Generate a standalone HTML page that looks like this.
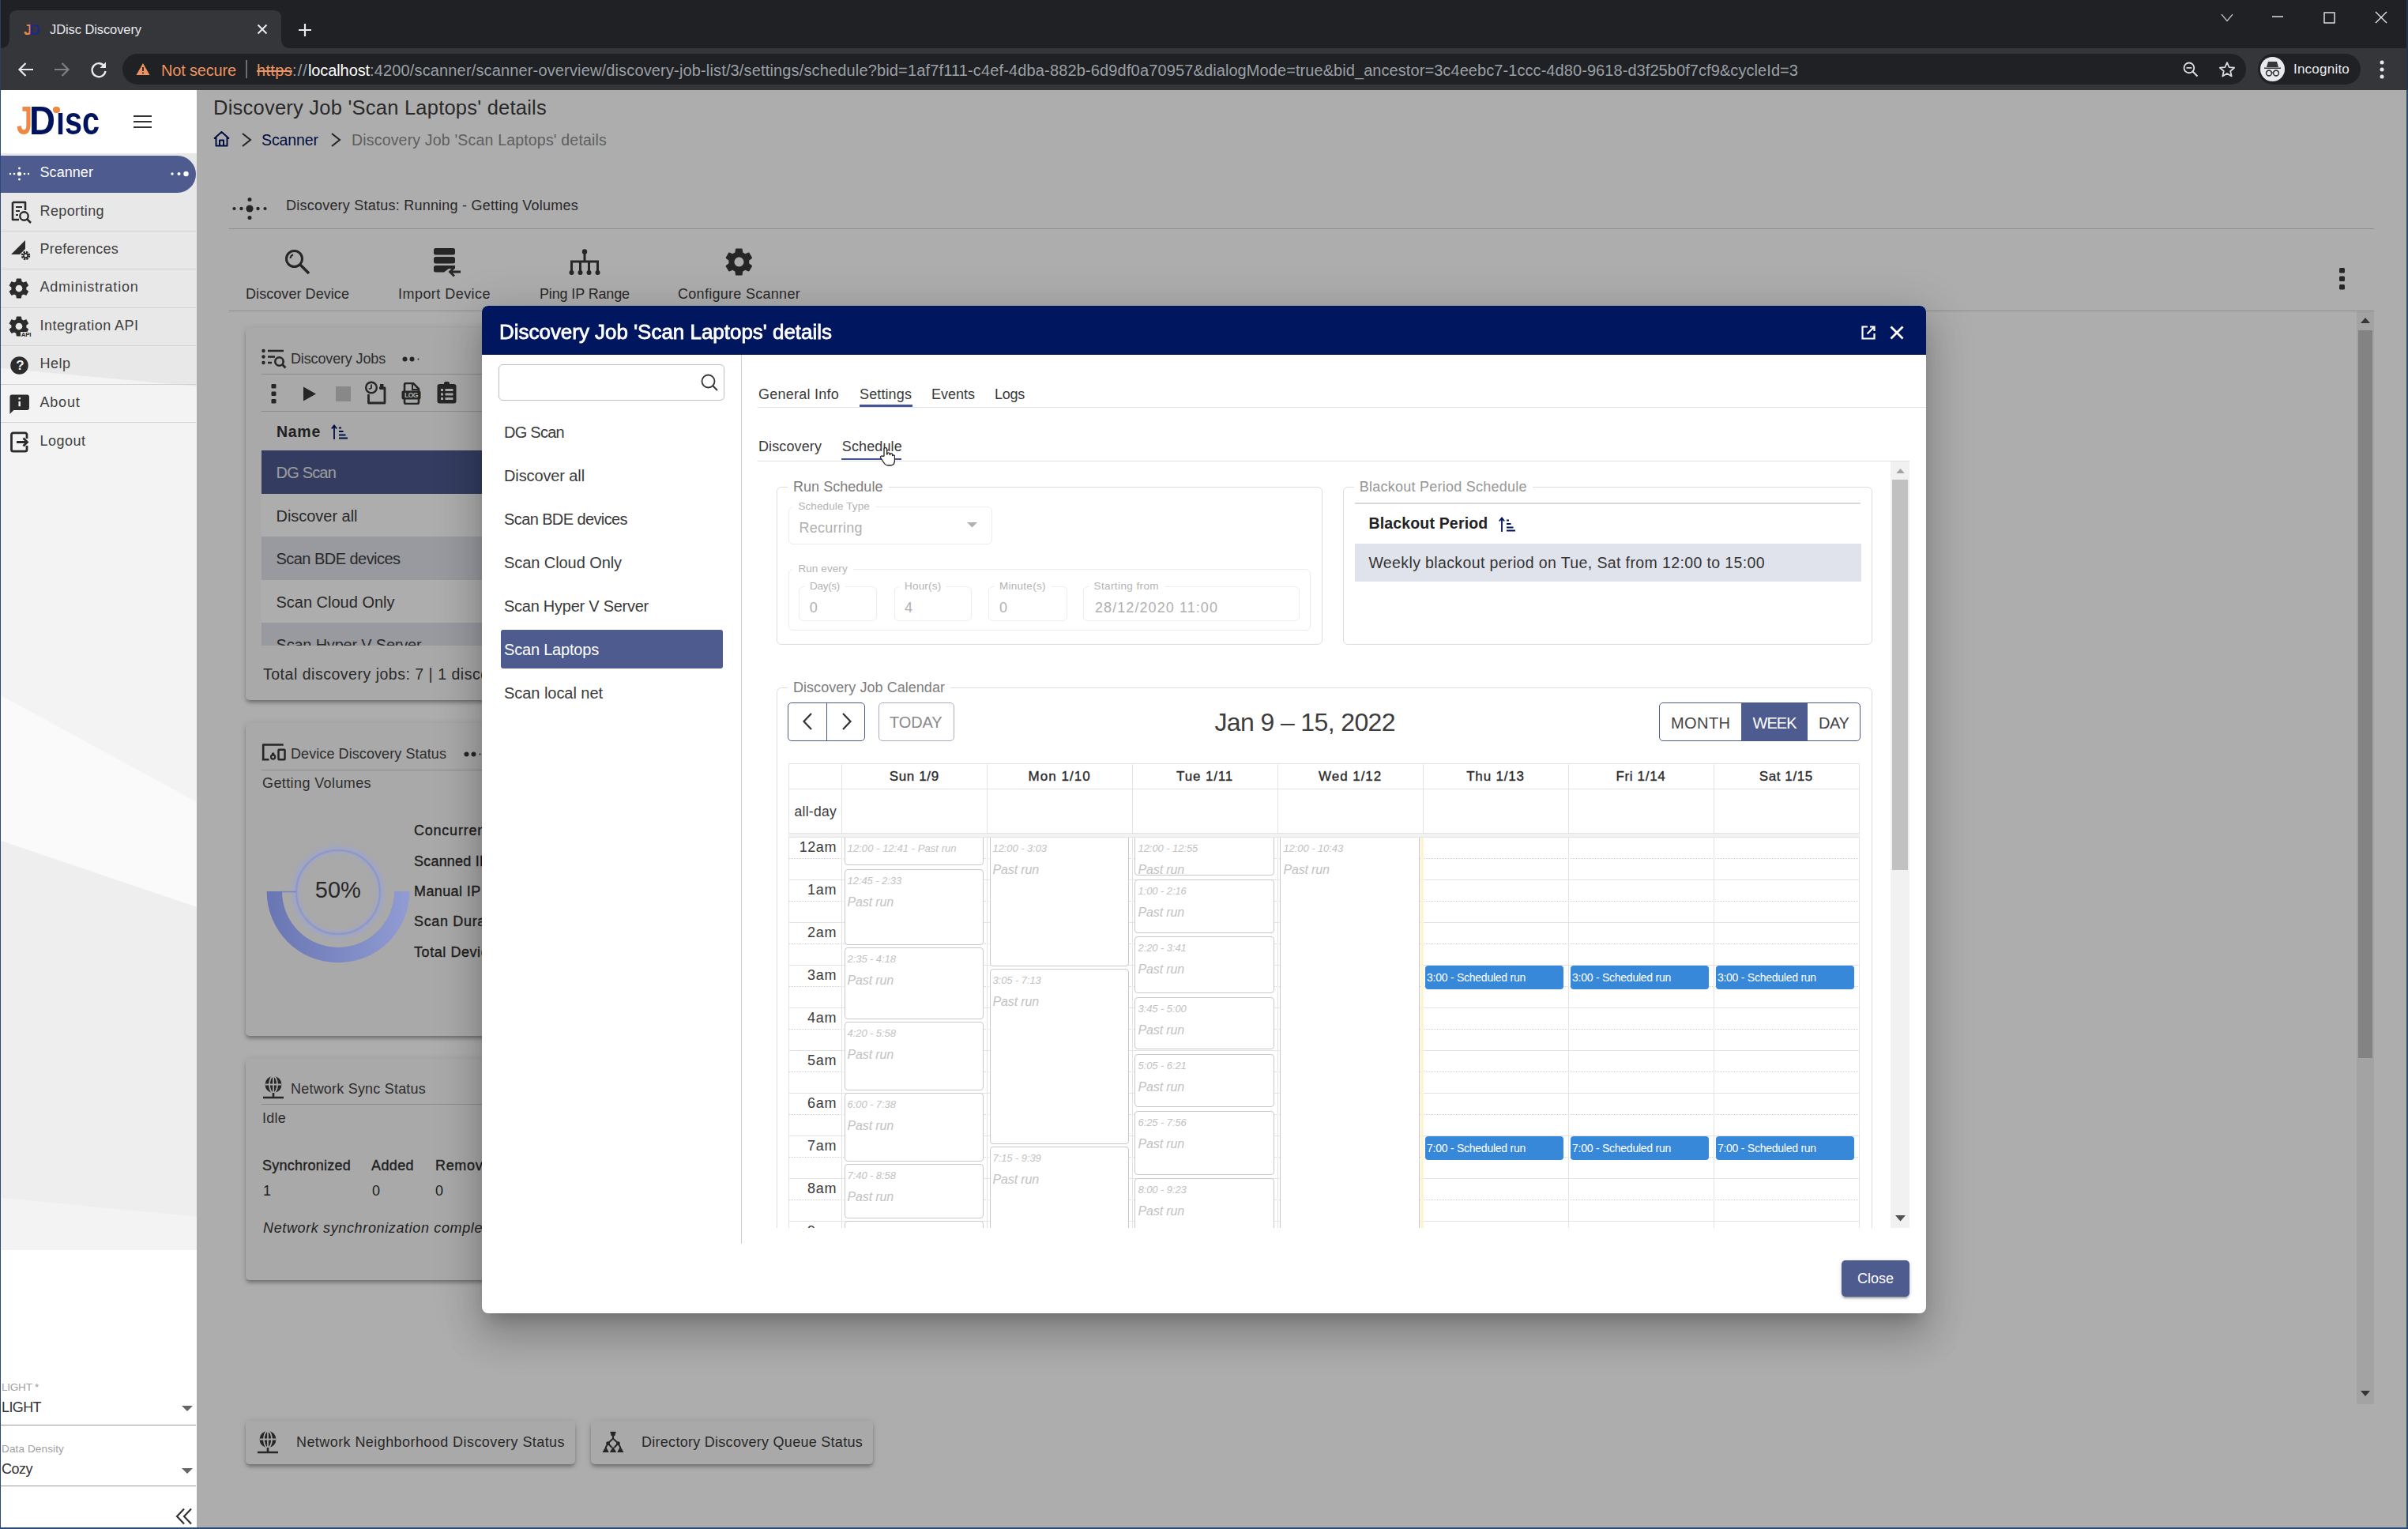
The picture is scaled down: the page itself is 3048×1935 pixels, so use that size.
<!DOCTYPE html>
<html lang="en"><head><meta charset="utf-8"><title>JDisc Discovery</title>
<style>
html,body{margin:0;padding:0;background:#fff;}
body{width:3048px;height:1935px;overflow:hidden;position:relative;font-family:"Liberation Sans",sans-serif;}
#r{position:absolute;left:0;top:0;width:3048px;height:1935px;overflow:hidden;}
#r div,#r svg,#r span.t{position:absolute;}
#r span.t{white-space:nowrap;line-height:1;display:block;}
#r div{box-sizing:content-box;}
</style></head>
<body><div id="r">
<div style="left:0px;top:0px;width:3048px;height:61px;background:#202124;"></div>
<div style="left:0px;top:61px;width:3048px;height:53px;background:#35363a;"></div>
<svg style="left:0px;top:13px;" width="372" height="48" viewBox="0 0 372 48"><path d="M0 48 Q12 48 12 36 L12 10 Q12 0 22 0 L346 0 Q356 0 356 10 L356 36 Q356 48 368 48 Z" fill="#35363a"/></svg>
<span class="t" style="left:30.0px;top:27.9px;font-size:19px;color:#ee8844;letter-spacing:-1.567px;font-weight:700;">J</span>
<span class="t" style="left:37.0px;top:27.9px;font-size:19px;color:#1a2a8a;letter-spacing:0.279px;font-weight:700;">D</span>
<span class="t" style="left:63.0px;top:29.1px;font-size:16.5px;color:#e8eaed;letter-spacing:-0.090px;">JDisc Discovery</span>
<svg style="left:325px;top:30px;" width="14" height="14" viewBox="0 0 14 14"><path d="M1.5 1.5 L12.5 12.5 M12.5 1.5 L1.5 12.5" stroke="#e8eaed" stroke-width="2" fill="none"/></svg>
<svg style="left:377px;top:29px;" width="18" height="18" viewBox="0 0 18 18"><path d="M9 1 V17 M1 9 H17" stroke="#e8eaed" stroke-width="2.2" fill="none"/></svg>
<svg style="left:2810.5px;top:16.5px;" width="16" height="11" viewBox="0 0 16 11"><path d="M1 1.200 L8 9.500 L15 1.200" stroke="#c8c9cb" stroke-width="1.300" fill="none"/></svg>
<svg style="left:2876px;top:20px;" width="14" height="3" viewBox="0 0 14 3"><path d="M0 1 H14" stroke="#e8eaed" stroke-width="1.4"/></svg>
<svg style="left:2941px;top:15px;" width="15" height="15" viewBox="0 0 15 15"><rect x="1" y="1" width="13" height="13" stroke="#e8eaed" stroke-width="1.4" fill="none"/></svg>
<svg style="left:3006px;top:14px;" width="16" height="16" viewBox="0 0 16 16"><path d="M1 1 L15 15 M15 1 L1 15" stroke="#e8eaed" stroke-width="1.4" fill="none"/></svg>
<svg style="left:22px;top:77px;" width="22" height="22" viewBox="0 0 22 22"><path d="M20 11 H3 M10.5 3 L2.5 11 L10.5 19" stroke="#e8eaed" stroke-width="2.2" fill="none"/></svg>
<svg style="left:67px;top:77px;" width="22" height="22" viewBox="0 0 22 22"><path d="M2 11 H19 M11.5 3 L19.5 11 L11.5 19" stroke="#7d8084" stroke-width="2.2" fill="none"/></svg>
<svg style="left:113px;top:76px;" width="24" height="24" viewBox="0 0 24 24"><path d="M19.5 8.5 A8.5 8.5 0 1 0 20.5 14" stroke="#e8eaed" stroke-width="2.3" fill="none"/><path d="M21 2.5 V10 H13.5 Z" fill="#e8eaed"/></svg>
<div style="left:155px;top:68px;width:2688px;height:39px;background:#202124;border-radius:20px;"></div>
<svg style="left:172px;top:79px;" width="18" height="17" viewBox="0 0 18 17"><path d="M9 1 L17.5 16 H0.5 Z" fill="#ee9460"/><path d="M9 6 V11 M9 12.5 V14.3" stroke="#202124" stroke-width="1.8"/></svg>
<span class="t" style="left:204.0px;top:78.5px;font-size:20px;color:#ee9460;letter-spacing:-0.171px;">Not secure</span>
<div style="left:311px;top:76px;width:1.5px;height:23px;background:#6b6e72;"></div>
<span class="t" style="left:325.0px;top:78.5px;font-size:20px;color:#ee9460;letter-spacing:0.328px;text-decoration:line-through;">https</span>
<span class="t" style="left:370.0px;top:78.5px;font-size:20px;color:#9aa0a6;letter-spacing:1.110px;">://</span>
<span class="t" style="left:390.0px;top:78.5px;font-size:20px;color:#ffffff;letter-spacing:-0.104px;">localhost</span>
<span class="t" style="left:468.0px;top:78.5px;font-size:20px;color:#9aa0a6;letter-spacing:0.150px;">:4200/scanner/scanner-overview/discovery-job-list/3/settings/schedule?bid=1af7f111-c4ef-4dba-882b-6d9df0a70957&amp;</span>
<span class="t" style="left:1524.0px;top:78.5px;font-size:20px;color:#9aa0a6;letter-spacing:0.072px;">dialogMode=true&amp;bid_ancestor=3c4eebc7-1ccc-4d80-9618-d3f25b0f7cf9&amp;cycleId=3</span>
<svg style="left:2762px;top:77px;" width="22" height="22" viewBox="0 0 26 26"><circle cx="10.5" cy="10.5" r="7.5" stroke="#dadce0" stroke-width="2.2" fill="none"/><path d="M16 16 L23 23" stroke="#dadce0" stroke-width="2.4"/><path d="M6.5 10.5 H14.5" stroke="#dadce0" stroke-width="2"/></svg>
<svg style="left:2807.5px;top:76.5px;" width="22" height="22" viewBox="0 0 26 26"><path d="M13 2.5 L16.1 9.6 L23.8 10.3 L18 15.4 L19.7 23 L13 19 L6.3 23 L8 15.4 L2.2 10.3 L9.9 9.6 Z" stroke="#dadce0" stroke-width="2.1" fill="none" stroke-linejoin="round"/></svg>
<div style="left:2858px;top:68px;width:130px;height:39px;background:#202124;border-radius:20px;"></div>
<div style="left:2861px;top:72px;width:31px;height:31px;background:#e8eaed;border-radius:50%;"></div>
<svg style="left:2864px;top:76px;" width="25" height="23" viewBox="0 0 25 23"><path d="M7 2 H18 L20 9 H5 Z M2 9.5 H23 V11 H2 Z" fill="#35363a"/><circle cx="8" cy="16.5" r="3.4" stroke="#35363a" stroke-width="1.6" fill="none"/><circle cx="17" cy="16.5" r="3.4" stroke="#35363a" stroke-width="1.6" fill="none"/><path d="M11.4 16 H13.6" stroke="#35363a" stroke-width="1.4"/></svg>
<span class="t" style="left:2903.0px;top:78.9px;font-size:17px;color:#e8eaed;letter-spacing:0.223px;">Incognito</span>
<svg style="left:3011px;top:75px;" width="8" height="26" viewBox="0 0 8 26"><circle cx="4" cy="4" r="2.5" fill="#e8eaed"/><circle cx="4" cy="13" r="2.5" fill="#e8eaed"/><circle cx="4" cy="22" r="2.5" fill="#e8eaed"/></svg>
<div style="left:0px;top:0px;width:1px;height:114px;background:#2a3f63;"></div>
<div style="left:3046px;top:0px;width:2px;height:114px;background:#22344e;"></div>
<div style="left:0px;top:114px;width:249px;height:1821px;background:#ffffff;"></div>
<svg style="left:1px;top:194px;" width="248" height="1388" viewBox="0 0 248 1388"><rect width="248" height="1388" fill="#f3f3f3"/><polygon points="0,0 248,0 248,295 0,272" fill="#e8e8e8"/><polygon points="0,686 248,821 248,954 0,870" fill="#fafafa"/><polygon points="0,870 248,954 248,1346 0,1322" fill="#eeeeee"/><polygon points="0,1322 248,1346 248,1388 0,1388" fill="#f3f3f3"/></svg>
<span class="t" style="left:21.0px;top:128.2px;font-size:50px;color:#ee8844;letter-spacing:0.000px;font-weight:700;transform:scaleX(0.7192);transform-origin:0 50%;">J</span>
<span class="t" style="left:37.0px;top:128.2px;font-size:50px;color:#00145e;letter-spacing:0.000px;font-weight:700;transform:scaleX(0.9139);transform-origin:0 50%;">D</span>
<span class="t" style="left:70.5px;top:128.2px;font-size:50px;color:#00145e;letter-spacing:0.000px;font-weight:700;transform:scaleX(0.7913);transform-origin:0 50%;">ısc</span>
<div style="left:67px;top:134.5px;width:8.5px;height:8.5px;background:#ee8844;border-radius:50%;"></div>
<div style="left:169px;top:146px;width:23px;height:2.2px;background:#333;"></div>
<div style="left:169px;top:153px;width:23px;height:2.2px;background:#333;"></div>
<div style="left:169px;top:160px;width:23px;height:2.2px;background:#333;"></div>
<div style="left:1px;top:196.5px;width:246.5px;height:47px;background:#4d5b8f;border-radius:0 24px 24px 0;"></div>
<svg style="left:10px;top:207px;" width="28" height="26" viewBox="0 0 28 26"><g fill="#fff"><circle cx="14.5" cy="13" r="2.6"/><circle cx="14.5" cy="6" r="1.4"/><circle cx="14.5" cy="20" r="1.4"/><circle cx="8" cy="13" r="1.3"/><circle cx="3" cy="13" r="1.2"/><circle cx="21" cy="13" r="1.3"/><circle cx="26" cy="13" r="1.2"/></g></svg>
<span class="t" style="left:50.5px;top:209.4px;font-size:18px;color:#ffffff;letter-spacing:0.065px;">Scanner</span>
<svg style="left:214px;top:215px;" width="28" height="10" viewBox="0 0 28 10"><g fill="#fff"><circle cx="4" cy="5" r="1.7"/><circle cx="12.5" cy="5" r="2"/><circle cx="21.5" cy="5" r="3.2"/></g></svg>
<span class="t" style="left:50.5px;top:257.6px;font-size:18px;color:#3f3f3f;letter-spacing:0.384px;">Reporting</span>
<div style="left:1px;top:292px;width:247px;height:0px;border-top:1px solid #d3d3d3;"></div>
<span class="t" style="left:50.5px;top:306.0px;font-size:18px;color:#3f3f3f;letter-spacing:0.223px;">Preferences</span>
<div style="left:1px;top:340.4px;width:247px;height:0px;border-top:1px solid #d3d3d3;"></div>
<span class="t" style="left:50.5px;top:354.4px;font-size:18px;color:#3f3f3f;letter-spacing:0.782px;">Administration</span>
<div style="left:1px;top:388.8px;width:247px;height:0px;border-top:1px solid #d3d3d3;"></div>
<span class="t" style="left:50.5px;top:402.8px;font-size:18px;color:#3f3f3f;letter-spacing:0.461px;">Integration API</span>
<div style="left:1px;top:437.2px;width:247px;height:0px;border-top:1px solid #d3d3d3;"></div>
<span class="t" style="left:50.5px;top:451.4px;font-size:18px;color:#3f3f3f;letter-spacing:0.495px;">Help</span>
<div style="left:1px;top:485.8px;width:247px;height:0px;border-top:1px solid #d3d3d3;"></div>
<span class="t" style="left:50.5px;top:500.0px;font-size:18px;color:#3f3f3f;letter-spacing:0.792px;">About</span>
<div style="left:1px;top:534.4px;width:247px;height:0px;border-top:1px solid #d3d3d3;"></div>
<span class="t" style="left:50.5px;top:548.7px;font-size:18px;color:#3f3f3f;letter-spacing:0.491px;">Logout</span>
<svg style="left:13px;top:254px;" width="28" height="30" viewBox="0 0 28 30"><path d="M3 2 H19 V12 M3 2 V24 H11" stroke="#2b2b2b" stroke-width="2.6" fill="none" stroke-linejoin="round"/><path d="M7 8 H15 M7 13 H12 M7 18 H10" stroke="#2b2b2b" stroke-width="2.2"/><circle cx="17.5" cy="19.5" r="5.2" stroke="#2b2b2b" stroke-width="2.4" fill="none"/><path d="M21.5 23.5 L26 28" stroke="#2b2b2b" stroke-width="2.6"/></svg>
<svg style="left:13px;top:303px;" width="28" height="28" viewBox="0 0 28 28"><path d="M1 19 L19 1 V12 L12 19 Z" fill="#2b2b2b"/><circle cx="19.5" cy="20.5" r="4.2" stroke="#2b2b2b" stroke-width="3" fill="none" stroke-dasharray="2.2 1.1"/><circle cx="19.5" cy="20.5" r="2.6" stroke="#2b2b2b" stroke-width="1.6" fill="none"/></svg>
<svg style="left:9.4px;top:350.4px;" width="30" height="30" viewBox="0 0 24 24"><g fill="#2b2b2b"><path d="M19.4 13c0-.3.1-.6.1-1s0-.7-.1-1l2.100-1.700c.2-.2.200-.400.100-.600l-2-3.500c-.100-.200-.400-.300-.600-.200l-2.500 1c-.500-.400-1.100-.700-1.700-1l-.400-2.600c0-.200-.200-.400-.500-.400h-4c-.200 0-.500.200-.500.400l-.400 2.600c-.600.300-1.200.600-1.700 1l-2.500-1c-.200-.100-.500 0-.600.200l-2 3.500c-.100.200-.100.500.100.600l2.100 1.700c0 .3-.1.600-.1 1s0 .7.100 1l-2.100 1.700c-.200.200-.200.400-.100.600l2 3.500c.100.200.400.300.600.200l2.500-1c.5.400 1.100.7 1.700 1l.4 2.600c0 .2.200.4.500.4h4c.2 0 .5-.2.500-.4l.4-2.600c.6-.3 1.200-.6 1.700-1l2.500 1c.2.100.5 0 .6-.2l2-3.500c.1-.2.100-.5-.1-.6l-2.100-1.700zM12 15.500c-1.900 0-3.500-1.600-3.500-3.500s1.600-3.500 3.500-3.500 3.500 1.600 3.500 3.500-1.600 3.500-3.500 3.500z"/></g></svg>
<svg style="left:9.4px;top:398.2px;" width="30" height="30" viewBox="0 0 24 24"><g fill="#2b2b2b"><path d="M19.4 13c0-.3.1-.6.1-1s0-.7-.1-1l2.100-1.700c.2-.2.200-.400.100-.600l-2-3.500c-.100-.200-.400-.300-.600-.200l-2.500 1c-.500-.400-1.100-.700-1.700-1l-.400-2.600c0-.200-.200-.400-.500-.400h-4c-.200 0-.500.200-.500.400l-.400 2.600c-.600.300-1.200.600-1.700 1l-2.500-1c-.200-.100-.500 0-.600.200l-2 3.500c-.100.200-.100.500.100.600l2.100 1.700c0 .3-.1.600-.1 1s0 .7.100 1l-2.100 1.700c-.200.200-.200.400-.100.600l2 3.500c.100.200.400.300.600.200l2.500-1c.5.400 1.100.7 1.700 1l.4 2.600c0 .2.200.4.500.4h4c.2 0 .5-.2.500-.4l.4-2.600c.6-.3 1.200-.6 1.700-1l2.500 1c.2.100.5 0 .6-.2l2-3.500c.1-.2.100-.5-.1-.6l-2.100-1.700zM12 15.500c-1.900 0-3.500-1.600-3.500-3.500s1.600-3.500 3.500-3.500 3.500 1.600 3.500 3.500-1.600 3.500-3.500 3.500z"/></g></svg>
<div style="left:26px;top:419.5px;width:14px;height:8px;background:#e8e8e8;"></div>
<span class="t" style="left:26.7px;top:419.6px;font-size:8px;color:#2b2b2b;letter-spacing:-0.279px;font-weight:700;">API</span>
<svg style="left:11.2px;top:448.5px;" width="27" height="27" viewBox="0 0 24 24"><circle cx="12" cy="12" r="10" fill="#2b2b2b"/></svg>
<span class="t" style="left:20.2px;top:454.2px;font-size:17px;color:#efefef;letter-spacing:-1.384px;font-weight:700;">?</span>
<svg style="left:9.75px;top:497px;" width="29.4" height="29.4" viewBox="0 0 24 24"><path d="M20 2H4c-1.100 0-2 .900-2 2v18l4-4h14c1.100 0 2-.900 2-2V4c0-1.100-.900-2-2-2zm-7 12h-2V9h2v5zm0-7h-2V5h2v2z" fill="#2b2b2b"/></svg>
<svg style="left:13px;top:545.5px;" width="24" height="27" viewBox="0 0 24 27"><path d="M21 9 V4 a2.200 2.200 0 0 0 -2.200 -2.200 H3.700 a2.200 2.200 0 0 0 -2.200 2.200 V23 a2.200 2.200 0 0 0 2.200 2.200 H18.800 a2.200 2.200 0 0 0 2.200 -2.200 V18" stroke="#2b2b2b" stroke-width="2.800" fill="none"/><path d="M8 13.500 H21 M16.500 8.500 L21.500 13.500 L16.500 18.500" stroke="#2b2b2b" stroke-width="2.800" fill="none"/></svg>
<span class="t" style="left:2.0px;top:1748.6px;font-size:13.5px;color:#a0a0a0;letter-spacing:-0.217px;">LIGHT *</span>
<span class="t" style="left:2.0px;top:1772.4px;font-size:18px;color:#333;letter-spacing:-0.601px;">LIGHT</span>
<svg style="left:230px;top:1779px;" width="14" height="8" viewBox="0 0 14 8"><path d="M0 0 H14 L7 7 Z" fill="#666"/></svg>
<div style="left:1px;top:1803px;width:247px;height:1.2px;background:#9a9a9a;"></div>
<span class="t" style="left:2.0px;top:1826.6px;font-size:13.5px;color:#a0a0a0;letter-spacing:0.143px;">Data Density</span>
<span class="t" style="left:2.0px;top:1850.4px;font-size:18px;color:#333;letter-spacing:-0.502px;">Cozy</span>
<svg style="left:230px;top:1858px;" width="14" height="8" viewBox="0 0 14 8"><path d="M0 0 H14 L7 7 Z" fill="#666"/></svg>
<div style="left:1px;top:1880.3px;width:247px;height:1.2px;background:#9a9a9a;"></div>
<svg style="left:221.5px;top:1908px;" width="22" height="22" viewBox="0 0 22 22"><path d="M11 1.500 L2 11 L11 20.500 M20 1.500 L11 11 L20 20.500" stroke="#333" stroke-width="2.200" fill="none"/></svg>
<div style="left:249px;top:114px;width:2797px;height:1819px;background:#ffffff;"></div>
<span class="t" style="left:270.0px;top:123.8px;font-size:25.5px;color:#3d3d3d;letter-spacing:0.230px;">Discovery Job 'Scan Laptops' details</span>
<svg style="left:269px;top:165px;" width="23" height="21" viewBox="0 0 23 21"><path d="M2 10.500 L11.500 2 L21 10.500 M4.500 9 V19.500 H18.500 V9 M9 19.500 V12.500 H14 V19.500" stroke="#00145e" stroke-width="2" fill="none" stroke-linejoin="round"/></svg>
<svg style="left:305px;top:167px;" width="14" height="20" viewBox="0 0 14 20"><path d="M2 2 L12 10 L2 18" stroke="#333" stroke-width="2" fill="none"/></svg>
<span class="t" style="left:331.0px;top:167.7px;font-size:19.5px;color:#00145e;letter-spacing:-0.090px;">Scanner</span>
<svg style="left:418px;top:167px;" width="14" height="20" viewBox="0 0 14 20"><path d="M2 2 L12 10 L2 18" stroke="#333" stroke-width="2" fill="none"/></svg>
<span class="t" style="left:445.0px;top:167.7px;font-size:19.5px;color:#8c8c8c;letter-spacing:0.184px;">Discovery Job 'Scan Laptops' details</span>
<svg style="left:292px;top:247.5px;" width="48" height="34" viewBox="0 0 48 34"><g fill="#383838"><circle cx="24" cy="16" r="4.600"/><circle cx="24" cy="4.500" r="2.500"/><circle cx="24" cy="27.500" r="2.500"/><circle cx="13.500" cy="16" r="2.200"/><circle cx="4.500" cy="16" r="2.100"/><circle cx="34.500" cy="16" r="2.200"/><circle cx="43.500" cy="16" r="2.100"/></g></svg>
<span class="t" style="left:362.0px;top:251.4px;font-size:18px;color:#3d3d3d;letter-spacing:0.229px;">Discovery Status: Running - Getting Volumes</span>
<div style="left:290px;top:288.5px;width:2715px;height:1.2px;background:#d0d0d0;"></div>
<svg style="left:359px;top:314px;" width="34" height="34" viewBox="0 0 34 34"><circle cx="13.500" cy="13.500" r="10" stroke="#383838" stroke-width="3" fill="none"/><path d="M21 21 L32 32" stroke="#383838" stroke-width="3.600"/><path d="M8.500 13 A5.500 5.500 0 0 1 12 8.200" stroke="#383838" stroke-width="2" fill="none"/></svg>
<span class="t" style="left:311.0px;top:363.4px;font-size:18px;color:#3d3d3d;letter-spacing:0.064px;">Discover Device</span>
<svg style="left:548px;top:313px;" width="36" height="38" viewBox="0 0 36 38"><g fill="#383838"><rect x="1" y="1" width="27" height="8.500" rx="2.500"/><rect x="1" y="12" width="27" height="8.500" rx="2.500"/><path d="M1 25.500 a2.500 2.500 0 0 1 2.500 -2.500 H28 V27 H20 L14 31.500 H3.500 a2.500 2.500 0 0 1 -2.500 -2.500 Z"/></g><path d="M35 31 H22 M27 25.500 L21.500 31 L27 36.500" stroke="#383838" stroke-width="2.800" fill="none"/></svg>
<span class="t" style="left:504.0px;top:363.4px;font-size:18px;color:#3d3d3d;letter-spacing:0.459px;">Import Device</span>
<svg style="left:720px;top:314px;" width="40" height="36" viewBox="0 0 40 36"><circle cx="20" cy="4.500" r="3.200" fill="#383838"/><path d="M20 6 V17 M3.500 31 V17 H36.500 V31 M14.500 17 V31 M25.500 17 V31" stroke="#383838" stroke-width="3" fill="none"/><g fill="#383838"><circle cx="3.500" cy="31" r="3"/><circle cx="14.500" cy="31" r="3"/><circle cx="25.500" cy="31" r="3"/><circle cx="36.500" cy="31" r="3"/></g></svg>
<span class="t" style="left:683.0px;top:363.4px;font-size:18px;color:#3d3d3d;letter-spacing:-0.135px;">Ping IP Range</span>
<svg style="left:915px;top:311px;" width="41" height="41" viewBox="0 0 24 24"><g fill="#383838"><path d="M19.4 13c0-.3.1-.6.1-1s0-.7-.1-1l2.100-1.700c.2-.2.200-.400.100-.600l-2-3.500c-.100-.200-.400-.300-.600-.200l-2.500 1c-.500-.400-1.100-.700-1.700-1l-.400-2.600c0-.200-.200-.400-.500-.400h-4c-.200 0-.500.200-.500.400l-.400 2.600c-.600.300-1.200.600-1.700 1l-2.500-1c-.200-.100-.500 0-.600.200l-2 3.500c-.100.200-.100.500.100.600l2.100 1.700c0 .3-.1.600-.1 1s0 .7.100 1l-2.100 1.700c-.200.200-.200.400-.100.600l2 3.500c.100.200.400.300.600.200l2.500-1c.5.400 1.100.7 1.700 1l.4 2.600c0 .2.200.4.500.4h4c.2 0 .5-.2.500-.4l.4-2.600c.6-.3 1.200-.6 1.700-1l2.500 1c.2.100.5 0 .6-.2l2-3.500c.1-.2.100-.5-.1-.6l-2.100-1.700zM12 15.500c-1.900 0-3.500-1.600-3.500-3.500s1.600-3.500 3.500-3.500 3.500 1.600 3.500 3.500-1.600 3.500-3.500 3.500z"/></g></svg>
<span class="t" style="left:858.0px;top:363.4px;font-size:18px;color:#3d3d3d;letter-spacing:0.289px;">Configure Scanner</span>
<div style="left:290px;top:392.5px;width:2715px;height:1.2px;background:#d0d0d0;"></div>
<svg style="left:2960px;top:339px;" width="9" height="28" viewBox="0 0 9 28"><rect x="1" y="0" width="7" height="6.500" rx="1.500" fill="#383838"/><rect x="1" y="10.500" width="7" height="6.500" rx="1.500" fill="#383838"/><rect x="1" y="21" width="7" height="6.500" rx="1.500" fill="#383838"/></svg>
<div style="left:2983px;top:394px;width:22px;height:1383px;background:#f1f1f1;"></div>
<div style="left:2985px;top:418px;width:18px;height:921px;background:#c1c1c1;"></div>
<svg style="left:2988px;top:402px;" width="12" height="8" viewBox="0 0 12 8"><path d="M0 7 L6 0 L12 7 Z" fill="#505050"/></svg>
<svg style="left:2988px;top:1760px;" width="12" height="8" viewBox="0 0 12 8"><path d="M0 0 L6 7 L12 0 Z" fill="#505050"/></svg>
<div style="left:311px;top:415px;width:1300px;height:471px;background:#f9f9f9;border-radius:5px;box-shadow:0 4px 4px -2px rgba(0,0,0,.2),0 4px 5px 0 rgba(0,0,0,.14),0 1px 10px 0 rgba(0,0,0,.12);"></div>
<svg style="left:331px;top:441px;" width="32" height="26" viewBox="0 0 32 26"><g fill="#383838"><circle cx="2.500" cy="3" r="2.200"/><circle cx="2.500" cy="10.500" r="2.200"/><circle cx="2.500" cy="18" r="2.200"/></g><path d="M8 3 H28 M8 10.500 H17 M8 18 H13" stroke="#383838" stroke-width="2.400"/><circle cx="22.500" cy="16.500" r="5.200" stroke="#383838" stroke-width="2.600" fill="none"/><path d="M26.500 20.500 L30.500 24.500" stroke="#383838" stroke-width="2.800"/></svg>
<span class="t" style="left:368.0px;top:445.4px;font-size:18px;color:#444;letter-spacing:-0.145px;">Discovery Jobs</span>
<svg style="left:509px;top:450px;" width="24" height="9" viewBox="0 0 24 9"><circle cx="3.500" cy="4.500" r="3" fill="#383838"/><circle cx="12.500" cy="4.500" r="3" fill="#383838"/><circle cx="20.500" cy="4.500" r="1" fill="#383838"/></svg>
<div style="left:331px;top:472.5px;width:1260px;height:1.2px;background:#cfcfcf;"></div>
<svg style="left:343px;top:486px;" width="8" height="25" viewBox="0 0 8 25"><rect x="0.500" y="0" width="6" height="5.500" rx="1.200" fill="#383838"/><rect x="0.500" y="9.500" width="6" height="5.500" rx="1.200" fill="#383838"/><rect x="0.500" y="19" width="6" height="5.500" rx="1.200" fill="#383838"/></svg>
<svg style="left:383px;top:489px;" width="18" height="19" viewBox="0 0 18 19"><path d="M1 0.500 L17 9.500 L1 18.500 Z" fill="#383838"/></svg>
<div style="left:425px;top:489px;width:18.5px;height:18.5px;background:#c9c9c9;"></div>
<svg style="left:461px;top:482px;" width="30" height="30" viewBox="0 0 30 30"><circle cx="9" cy="8.500" r="6.800" stroke="#383838" stroke-width="2.400" fill="none"/><path d="M9 4.500 V9 L6 10.500" stroke="#383838" stroke-width="1.800" fill="none"/><path d="M5.500 17 V28 H26 V9 H19" stroke="#383838" stroke-width="2.800" fill="none" stroke-linejoin="round"/><rect x="20" y="4" width="4.500" height="7" fill="#383838"/></svg>
<svg style="left:508px;top:484px;" width="25" height="28" viewBox="0 0 25 28"><path d="M4 12 V3 a2 2 0 0 1 2 -2 H15 L22 8 V12" stroke="#383838" stroke-width="2.600" fill="none"/><path d="M14 2 V9 H21" stroke="#383838" stroke-width="2" fill="none"/><rect x="0.500" y="10.500" width="24" height="11" rx="2" fill="#383838"/><path d="M4 21 V25 a2 2 0 0 0 2 2 H20 a2 2 0 0 0 2 -2 V21" stroke="#383838" stroke-width="2.600" fill="none"/></svg>
<span class="t" style="left:512.0px;top:495.9px;font-size:8.5px;color:#fff;letter-spacing:-0.472px;font-weight:700;">LOG</span>
<svg style="left:553px;top:483px;" width="25" height="28" viewBox="0 0 25 28"><rect x="0.500" y="3" width="24" height="24.500" rx="3" fill="#383838"/><rect x="9" y="0" width="7" height="6" rx="2" fill="#383838"/><g fill="#f9f9f9"><rect x="5" y="9" width="3" height="3"/><rect x="10.500" y="9" width="10" height="3"/><rect x="5" y="14.500" width="3" height="3"/><rect x="10.500" y="14.500" width="10" height="3"/><rect x="5" y="20" width="3" height="3"/><rect x="10.500" y="20" width="10" height="3"/></g></svg>
<div style="left:331px;top:519.5px;width:1260px;height:1.2px;background:#cfcfcf;"></div>
<span class="t" style="left:350.0px;top:536.7px;font-size:19.5px;color:#303030;letter-spacing:0.722px;font-weight:700;">Name</span>
<svg style="left:419px;top:536px;" width="22" height="22" viewBox="0 0 22 22"><path d="M4 20 V3 M0.800 6.500 L4 2.500 L7.200 6.500" stroke="#00145e" stroke-width="1.800" fill="none"/><path d="M10 5.500 H13 M10 10 H15.500 M10 14.500 H18.500 M10 18.500 H21" stroke="#00145e" stroke-width="1.800"/></svg>
<div style="left:331px;top:570px;width:1260px;height:247px;overflow:hidden;"><div style="left:0px;top:0px;width:1260px;height:54.5px;background:#4d5b8f;"></div>
<span class="t" style="left:18.5px;top:18.2px;font-size:20px;color:#e6e6e6;letter-spacing:-0.806px;">DG Scan</span>
<div style="left:0px;top:54.5px;width:1260px;height:54.5px;background:#ffffff;"></div>
<span class="t" style="left:18.5px;top:72.7px;font-size:20px;color:#3d3d3d;letter-spacing:-0.030px;">Discover all</span>
<div style="left:0px;top:109px;width:1260px;height:54.5px;background:#e0e3ec;"></div>
<span class="t" style="left:18.5px;top:127.2px;font-size:20px;color:#3d3d3d;letter-spacing:-0.540px;">Scan BDE devices</span>
<div style="left:0px;top:163.5px;width:1260px;height:54.5px;background:#ffffff;"></div>
<span class="t" style="left:18.5px;top:181.7px;font-size:20px;color:#3d3d3d;letter-spacing:-0.005px;">Scan Cloud Only</span>
<div style="left:0px;top:218px;width:1260px;height:54.5px;background:#e0e3ec;"></div>
<span class="t" style="left:18.5px;top:236.2px;font-size:20px;color:#3d3d3d;letter-spacing:-0.203px;">Scan Hyper V Server</span></div>
<span class="t" style="left:333.0px;top:843.7px;font-size:19.5px;color:#3d3d3d;letter-spacing:0.515px;">Total discovery jobs: 7 | 1 discovery job running</span>
<div style="left:311px;top:915px;width:1300px;height:396px;background:#f9f9f9;border-radius:5px;box-shadow:0 4px 4px -2px rgba(0,0,0,.2),0 4px 5px 0 rgba(0,0,0,.14),0 1px 10px 0 rgba(0,0,0,.12);"></div>
<svg style="left:331px;top:940px;" width="32" height="26" viewBox="0 0 32 26"><path d="M27.700 2.500 H2.200 V21.200 M0.800 21.200 H9.500" stroke="#383838" stroke-width="2.600" fill="none" stroke-linejoin="round"/><rect x="21.500" y="8.700" width="8" height="12.500" rx="0.800" stroke="#383838" stroke-width="2.500" fill="none"/><circle cx="14.600" cy="18" r="2.600" stroke="#383838" stroke-width="2.200" fill="none"/><rect x="13" y="12.600" width="3.200" height="3" fill="#383838"/></svg>
<span class="t" style="left:368.0px;top:945.4px;font-size:18px;color:#444;letter-spacing:0.084px;">Device Discovery Status</span>
<svg style="left:587px;top:950px;" width="24" height="9" viewBox="0 0 24 9"><circle cx="3.500" cy="4.500" r="3" fill="#383838"/><circle cx="12.500" cy="4.500" r="3" fill="#383838"/><circle cx="20.500" cy="4.500" r="1" fill="#383838"/></svg>
<div style="left:331px;top:973.5px;width:1260px;height:1.2px;background:#cfcfcf;"></div>
<span class="t" style="left:332.0px;top:982.4px;font-size:18px;color:#444;letter-spacing:0.395px;">Getting Volumes</span>
<span class="t" style="left:398.8px;top:1112.0px;font-size:29px;color:#3d3d3d;letter-spacing:-0.014px;">50%</span>
<span class="t" style="left:524.0px;top:1042.4px;font-size:18px;color:#303030;letter-spacing:0.776px;-webkit-text-stroke:0.35px currentColor;">Concurrent Threads</span>
<span class="t" style="left:524.0px;top:1080.7px;font-size:18px;color:#303030;letter-spacing:0.206px;-webkit-text-stroke:0.35px currentColor;">Scanned IPs</span>
<span class="t" style="left:524.0px;top:1119.0px;font-size:18px;color:#303030;letter-spacing:0.394px;-webkit-text-stroke:0.35px currentColor;">Manual IP Ranges</span>
<span class="t" style="left:524.0px;top:1157.3px;font-size:18px;color:#303030;letter-spacing:0.663px;-webkit-text-stroke:0.35px currentColor;">Scan Duration</span>
<span class="t" style="left:524.0px;top:1195.6px;font-size:18px;color:#303030;letter-spacing:0.561px;-webkit-text-stroke:0.35px currentColor;">Total Devices</span>
<div style="left:311px;top:1340px;width:1300px;height:279.5px;background:#f9f9f9;border-radius:5px;box-shadow:0 4px 4px -2px rgba(0,0,0,.2),0 4px 5px 0 rgba(0,0,0,.14),0 1px 10px 0 rgba(0,0,0,.12);"></div>
<svg style="left:332px;top:1361px;" width="28" height="30" viewBox="0 0 28 30"><circle cx="14" cy="11.500" r="10.500" fill="#383838"/><path d="M14 1 V22 M3.500 11.500 H24.500" stroke="#f9f9f9" stroke-width="1.800"/><ellipse cx="14" cy="11.500" rx="5" ry="10.500" stroke="#f9f9f9" stroke-width="1.800" fill="none"/><path d="M14 22 V27 M1 28 H27" stroke="#383838" stroke-width="2.600"/></svg>
<span class="t" style="left:368.0px;top:1369.4px;font-size:18px;color:#444;letter-spacing:0.207px;">Network Sync Status</span>
<div style="left:331px;top:1397px;width:1260px;height:1.2px;background:#cfcfcf;"></div>
<span class="t" style="left:332.0px;top:1406.4px;font-size:18px;color:#444;letter-spacing:0.245px;">Idle</span>
<span class="t" style="left:332.0px;top:1466.4px;font-size:18px;color:#303030;letter-spacing:0.245px;-webkit-text-stroke:0.35px currentColor;">Synchronized</span>
<span class="t" style="left:470.0px;top:1466.4px;font-size:18px;color:#303030;letter-spacing:0.390px;-webkit-text-stroke:0.35px currentColor;">Added</span>
<span class="t" style="left:551.0px;top:1466.4px;font-size:18px;color:#303030;letter-spacing:0.674px;-webkit-text-stroke:0.35px currentColor;">Removed</span>
<span class="t" style="left:333.0px;top:1498.4px;font-size:18px;color:#303030;letter-spacing:0.281px;">1</span>
<span class="t" style="left:471.0px;top:1498.4px;font-size:18px;color:#303030;letter-spacing:0.281px;">0</span>
<span class="t" style="left:551.0px;top:1498.4px;font-size:18px;color:#303030;letter-spacing:0.281px;">0</span>
<span class="t" style="left:333.0px;top:1544.9px;font-size:18px;color:#333;letter-spacing:0.632px;font-style:italic;">Network synchronization completed</span>
<div style="left:311px;top:1797.5px;width:417px;height:55px;background:#f9f9f9;border-radius:5px;box-shadow:0 4px 4px -2px rgba(0,0,0,.2),0 4px 5px 0 rgba(0,0,0,.14),0 1px 10px 0 rgba(0,0,0,.12);"></div>
<svg style="left:325px;top:1810px;" width="28" height="30" viewBox="0 0 28 30"><circle cx="14" cy="11.500" r="10.500" fill="#383838"/><path d="M14 1 V22 M3.500 11.500 H24.500" stroke="#f9f9f9" stroke-width="1.800"/><ellipse cx="14" cy="11.500" rx="5" ry="10.500" stroke="#f9f9f9" stroke-width="1.800" fill="none"/><path d="M14 22 V27 M1 28 H27" stroke="#383838" stroke-width="2.600"/></svg>
<span class="t" style="left:375.0px;top:1816.4px;font-size:18px;color:#3d3d3d;letter-spacing:0.428px;">Network Neighborhood Discovery Status</span>
<div style="left:748px;top:1797.5px;width:357px;height:55px;background:#f9f9f9;border-radius:5px;box-shadow:0 4px 4px -2px rgba(0,0,0,.2),0 4px 5px 0 rgba(0,0,0,.14),0 1px 10px 0 rgba(0,0,0,.12);"></div>
<svg style="left:762px;top:1811px;" width="28" height="28" viewBox="0 0 28 28"><g fill="#383838"><circle cx="14" cy="4" r="2.800"/><rect x="10.500" y="0.800" width="7" height="2.200"/><circle cx="7.500" cy="15.500" r="2.300"/><circle cx="20.500" cy="15.500" r="2.300"/><path d="M0.500 27 L4.700 19.500 L8.900 27 Z"/><path d="M9.800 27 L14 19.500 L18.200 27 Z"/><path d="M19.100 27 L23.300 19.500 L27.500 27 Z"/></g><path d="M14 6 V9.500 M14 9.500 L7.500 15.500 L4.700 21 M14 9.500 L20.500 15.500 L23.300 21 M7.500 15.500 L12.500 21 M20.500 15.500 L15.500 21" stroke="#383838" stroke-width="2" fill="none"/></svg>
<span class="t" style="left:812.0px;top:1816.4px;font-size:18px;color:#3d3d3d;letter-spacing:0.278px;">Directory Discovery Queue Status</span>
<div style="left:249px;top:114px;width:2797px;height:1819px;background:rgba(0,0,0,0.32);"></div>
<svg style="left:327.5px;top:1028.2px;" width="200" height="200" viewBox="0 0 200 200"><defs><filter id="gl" x="-30%" y="-30%" width="160%" height="160%"><feGaussianBlur stdDeviation="2.500"/></filter><linearGradient id="ag" x1="0" y1="0" x2="1" y2="0"><stop offset="0" stop-color="#6976b3"/><stop offset="0.5" stop-color="#7c88c2"/><stop offset="1" stop-color="#909cd2"/></linearGradient></defs><circle cx="100" cy="101" r="54" stroke="#98a3de" stroke-width="9" fill="none" filter="url(#gl)" opacity="0.5"/><circle cx="100" cy="101" r="53" stroke="#8f99c9" stroke-width="2.600" fill="none"/><path d="M9.600 100 A90.400 90.400 0 0 0 190.400 100 L171 100 A71 71 0 0 1 29 100 Z" fill="url(#ag)"/><path d="M29 100.600 H47" stroke="#7784c0" stroke-width="1.500"/></svg>
<div style="left:0px;top:114px;width:1px;height:1821px;background:#2b4a77;"></div>
<div style="left:3046px;top:114px;width:2px;height:1821px;background:#2b4a77;"></div>
<div style="left:0px;top:1933px;width:3048px;height:2px;background:#2b4a77;"></div>
<div style="left:610px;top:387px;width:1828px;height:1274.5px;background:#ffffff;border-radius:8px;box-shadow:0 14px 19px -9px rgba(0,0,0,.2),0 30px 48px 4px rgba(0,0,0,.14),0 11px 58px 10px rgba(0,0,0,.12);"></div>
<div style="left:610px;top:387px;width:1828px;height:62px;background:#00165e;border-radius:8px 8px 0 0;"></div>
<span class="t" style="left:632.0px;top:406.6px;font-size:26.5px;color:#ffffff;letter-spacing:0.000px;-webkit-text-stroke:0.8px currentColor;transform:scaleX(0.9792);transform-origin:0 50%;">Discovery Job 'Scan Laptops' details</span>
<svg style="left:2355px;top:411px;" width="20" height="20" viewBox="0 0 20 20"><path d="M9 2.500 H2.500 V17.500 H17.500 V11" stroke="#fff" stroke-width="2.200" fill="none"/><path d="M12 2.500 H17.500 V8 M17.500 2.500 L8.500 11.500" stroke="#fff" stroke-width="2.200" fill="none"/></svg>
<svg style="left:2391px;top:411px;" width="20" height="20" viewBox="0 0 20 20"><path d="M2.500 2.500 L17.500 17.500 M17.500 2.500 L2.500 17.500" stroke="#fff" stroke-width="2.800" fill="none"/></svg>
<div style="left:631px;top:461px;width:285.5px;height:46px;background:#fff;border:1.500px solid #bdbdbd;border-radius:5px;box-sizing:border-box;"></div>
<svg style="left:886px;top:472px;" width="24" height="24" viewBox="0 0 24 24"><circle cx="10.500" cy="10.500" r="8" stroke="#333" stroke-width="1.800" fill="none"/><path d="M16.500 16.500 L22 22" stroke="#333" stroke-width="2"/></svg>
<span class="t" style="left:638.0px;top:536.5px;font-size:20px;color:#3a3a3a;letter-spacing:-0.735px;">DG Scan</span>
<span class="t" style="left:638.0px;top:591.5px;font-size:20px;color:#3a3a3a;letter-spacing:-0.113px;">Discover all</span>
<span class="t" style="left:638.0px;top:646.5px;font-size:20px;color:#3a3a3a;letter-spacing:-0.602px;">Scan BDE devices</span>
<span class="t" style="left:638.0px;top:701.5px;font-size:20px;color:#3a3a3a;letter-spacing:-0.072px;">Scan Cloud Only</span>
<span class="t" style="left:638.0px;top:756.5px;font-size:20px;color:#3a3a3a;letter-spacing:-0.255px;">Scan Hyper V Server</span>
<div style="left:634px;top:796.5px;width:280.5px;height:49.5px;background:#4d5b8f;border-radius:3px;"></div>
<span class="t" style="left:638.0px;top:811.5px;font-size:20px;color:#ffffff;letter-spacing:-0.193px;">Scan Laptops</span>
<span class="t" style="left:638.0px;top:866.5px;font-size:20px;color:#3a3a3a;letter-spacing:-0.045px;">Scan local net</span>
<div style="left:938px;top:449px;width:1.2px;height:1124.5px;background:#cfcfcf;"></div>
<span class="t" style="left:960.0px;top:489.6px;font-size:18px;color:#3a3a3a;letter-spacing:0.245px;">General Info</span>
<span class="t" style="left:1088.0px;top:489.6px;font-size:18px;color:#3a3a3a;letter-spacing:0.120px;">Settings</span>
<span class="t" style="left:1179.0px;top:489.6px;font-size:18px;color:#3a3a3a;letter-spacing:-0.005px;">Events</span>
<span class="t" style="left:1259.0px;top:489.6px;font-size:18px;color:#3a3a3a;letter-spacing:-0.258px;">Logs</span>
<div style="left:1087.8px;top:512px;width:67.2px;height:3px;background:#45559b;"></div>
<div style="left:959px;top:515.2px;width:1479px;height:1.2px;background:#e0e0e0;"></div>
<span class="t" style="left:960.0px;top:555.8px;font-size:18px;color:#3a3a3a;letter-spacing:0.110px;">Discovery</span>
<span class="t" style="left:1065.8px;top:555.8px;font-size:18px;color:#3a3a3a;letter-spacing:0.118px;">Schedule</span>
<div style="left:1065px;top:579.6px;width:76px;height:2.2px;background:#45559b;"></div>
<div style="left:959px;top:582.5px;width:1458px;height:1.2px;background:#e0e0e0;"></div>
<div style="left:2393.3px;top:583.7px;width:23.5px;height:970.3px;background:#f1f1f1;"></div>
<div style="left:2395.1px;top:607px;width:20px;height:494px;background:#c1c1c1;"></div>
<svg style="left:2399.5px;top:592.8px;" width="11" height="6.5" viewBox="0 0 11 6.5"><path d="M0 6.300 L5.500 0 L11 6.300 Z" fill="#a3a3a3"/></svg>
<svg style="left:2399px;top:1537.5px;" width="13" height="8" viewBox="0 0 13 8"><path d="M0 0 L6.500 7.500 L13 0 Z" fill="#505050"/></svg>
<div style="left:983px;top:616px;width:690.5px;height:199.5px;border:1.2px solid #dddddd;border-radius:6px;box-sizing:border-box;"></div>
<div style="left:997px;top:614px;width:127.5px;height:5px;background:#fff;"></div>
<span class="t" style="left:1004.0px;top:606.9px;font-size:18px;color:#7d7d7d;letter-spacing:0.035px;">Run Schedule</span>
<div style="left:997.5px;top:641.3px;width:258px;height:47.7px;border:1.2px solid #ededed;border-radius:6px;box-sizing:border-box;"></div>
<div style="left:1003.4px;top:639.3px;width:104.5px;height:5px;background:#fff;"></div>
<span class="t" style="left:1010.4px;top:634.4px;font-size:13.5px;color:#b3b3b3;letter-spacing:0.110px;">Schedule Type</span>
<span class="t" style="left:1011.4px;top:658.9px;font-size:18px;color:#b0b0b0;letter-spacing:0.274px;">Recurring</span>
<svg style="left:1224px;top:660.5px;" width="13" height="7" viewBox="0 0 13 7"><path d="M0 0 H13 L6.500 6.500 Z" fill="#b0b0b0"/></svg>
<div style="left:997.5px;top:720px;width:661.7px;height:78px;border:1.2px solid #ececec;border-radius:6px;box-sizing:border-box;"></div>
<div style="left:1003.4px;top:718px;width:76.4px;height:5px;background:#fff;"></div>
<span class="t" style="left:1010.4px;top:713.1px;font-size:13.5px;color:#b3b3b3;letter-spacing:0.097px;">Run every</span>
<div style="left:1011.4px;top:741.7px;width:98.6px;height:44.5px;border:1.2px solid #ededed;border-radius:6px;box-sizing:border-box;"></div>
<div style="left:1018px;top:739.7px;width:52px;height:5px;background:#fff;"></div>
<span class="t" style="left:1025.0px;top:734.8px;font-size:13.5px;color:#b3b3b3;letter-spacing:-0.291px;">Day(s)</span>
<span class="t" style="left:1024.7px;top:759.9px;font-size:18px;color:#b0b0b0;letter-spacing:0.281px;">0</span>
<div style="left:1131.6px;top:741.7px;width:98.4px;height:44.5px;border:1.2px solid #ededed;border-radius:6px;box-sizing:border-box;"></div>
<div style="left:1138px;top:739.7px;width:60.4px;height:5px;background:#fff;"></div>
<span class="t" style="left:1145.0px;top:734.8px;font-size:13.5px;color:#b3b3b3;letter-spacing:0.200px;">Hour(s)</span>
<span class="t" style="left:1145.0px;top:759.9px;font-size:18px;color:#b0b0b0;letter-spacing:0.281px;">4</span>
<div style="left:1251px;top:741.7px;width:100px;height:44.5px;border:1.2px solid #ededed;border-radius:6px;box-sizing:border-box;"></div>
<div style="left:1258px;top:739.7px;width:72.7px;height:5px;background:#fff;"></div>
<span class="t" style="left:1265.0px;top:734.8px;font-size:13.5px;color:#b3b3b3;letter-spacing:0.271px;">Minute(s)</span>
<span class="t" style="left:1265.0px;top:759.9px;font-size:18px;color:#b0b0b0;letter-spacing:0.281px;">0</span>
<div style="left:1371px;top:741.7px;width:274px;height:44.5px;border:1.2px solid #ededed;border-radius:6px;box-sizing:border-box;"></div>
<div style="left:1377.5px;top:739.7px;width:96.5px;height:5px;background:#fff;"></div>
<span class="t" style="left:1384.5px;top:734.8px;font-size:13.5px;color:#b3b3b3;letter-spacing:0.402px;">Starting from</span>
<span class="t" style="left:1386.0px;top:759.9px;font-size:18px;color:#b0b0b0;letter-spacing:1.075px;">28/12/2020 11:00</span>
<div style="left:1700px;top:616px;width:670px;height:199.5px;border:1.2px solid #dddddd;border-radius:6px;box-sizing:border-box;"></div>
<div style="left:1713.8px;top:614px;width:226px;height:5px;background:#fff;"></div>
<span class="t" style="left:1720.8px;top:606.9px;font-size:18px;color:#969696;letter-spacing:0.245px;">Blackout Period Schedule</span>
<div style="left:1714.8px;top:636.3px;width:640.5px;height:1.5px;background:#d9d9d9;"></div>
<span class="t" style="left:1732.4px;top:653.3px;font-size:19.5px;color:#222;letter-spacing:0.170px;font-weight:700;">Blackout Period</span>
<svg style="left:1896.5px;top:653px;" width="22" height="22" viewBox="0 0 22 22"><path d="M4 20 V3 M0.800 6.500 L4 2.500 L7.200 6.500" stroke="#00145e" stroke-width="1.800" fill="none"/><path d="M10 5.500 H13 M10 10 H15.500 M10 14.500 H18.500 M10 18.500 H21" stroke="#00145e" stroke-width="1.800"/></svg>
<div style="left:1714.8px;top:687.5px;width:641.2px;height:48.8px;background:#e0e3ec;"></div>
<span class="t" style="left:1732.4px;top:703.1px;font-size:19.5px;color:#333;letter-spacing:0.383px;">Weekly blackout period on Tue, Sat from 12:00 to 15:00</span>
<div style="left:959px;top:583px;width:1435px;height:971px;overflow:hidden;"><div style="left:24px;top:287px;width:1387px;height:760px;border:1.200px solid #dddddd;border-radius:6px;box-sizing:border-box;"></div>
<div style="left:38px;top:285px;width:206px;height:5px;background:#fff;"></div>
<span class="t" style="left:45.0px;top:277.7px;font-size:18px;color:#7d7d7d;letter-spacing:0.042px;">Discovery Job Calendar</span>
<div style="left:38.2px;top:306.2px;width:98.3px;height:48.8px;background:#fff;border:1.500px solid #4d5b8f;border-radius:5px;box-sizing:border-box;"></div>
<div style="left:86.7px;top:306.2px;width:1.5px;height:48.8px;background:#4d5b8f;"></div>
<svg style="left:56px;top:318px;" width="14" height="24" viewBox="0 0 14 24"><path d="M12 2 L2.500 12 L12 22" stroke="#333" stroke-width="2.200" fill="none"/></svg>
<svg style="left:105.5px;top:318px;" width="14" height="24" viewBox="0 0 14 24"><path d="M2 2 L11.500 12 L2 22" stroke="#333" stroke-width="2.200" fill="none"/></svg>
<div style="left:152.5px;top:306.2px;width:96px;height:48.8px;background:#fff;border:1.500px solid #a4acc9;border-radius:5px;box-sizing:border-box;"></div>
<span class="t" style="left:167.0px;top:321.3px;font-size:20px;color:#8a8a8a;letter-spacing:-0.110px;">TODAY</span>
<span class="t" style="left:578.4px;top:315.1px;font-size:32px;color:#3d3d3d;letter-spacing:-0.614px;">Jan 9 – 15, 2022</span>
<div style="left:1141px;top:306.2px;width:254.5px;height:48.8px;background:#fff;border:1.500px solid #4d5b8f;border-radius:5px;box-sizing:border-box;"></div>
<div style="left:1245px;top:306.2px;width:84px;height:48.8px;background:#4d5b8f;"></div>
<span class="t" style="left:1156.0px;top:321.5px;font-size:20px;color:#444;letter-spacing:0.436px;">MONTH</span>
<span class="t" style="left:1259.5px;top:321.5px;font-size:20px;color:#fff;letter-spacing:-0.974px;">WEEK</span>
<span class="t" style="left:1343.0px;top:321.5px;font-size:20px;color:#444;letter-spacing:-0.380px;">DAY</span>
<div style="left:38.5px;top:382.5px;width:1356.5px;height:1px;background:#e3e3e3;"></div>
<div style="left:38.5px;top:382.5px;width:1px;height:600px;background:#e3e3e3;"></div>
<div style="left:38.5px;top:414.5px;width:1356.5px;height:1px;background:#e3e3e3;"></div>
<div style="left:106.3px;top:382.5px;width:1px;height:90px;background:#e3e3e3;"></div>
<div style="left:290.23px;top:382.5px;width:1px;height:90px;background:#e3e3e3;"></div>
<div style="left:474.16px;top:382.5px;width:1px;height:90px;background:#e3e3e3;"></div>
<div style="left:658.09px;top:382.5px;width:1px;height:90px;background:#e3e3e3;"></div>
<div style="left:842.02px;top:382.5px;width:1px;height:90px;background:#e3e3e3;"></div>
<div style="left:1025.95px;top:382.5px;width:1px;height:90px;background:#e3e3e3;"></div>
<div style="left:1209.88px;top:382.5px;width:1px;height:90px;background:#e3e3e3;"></div>
<div style="left:1393.81px;top:382.5px;width:1px;height:90px;background:#e3e3e3;"></div>
<span class="t" style="left:166.8px;top:391.2px;font-size:17px;color:#2a2a2a;letter-spacing:0.628px;-webkit-text-stroke:0.35px currentColor;">Sun 1/9</span>
<span class="t" style="left:342.4px;top:391.2px;font-size:17px;color:#2a2a2a;letter-spacing:1.077px;-webkit-text-stroke:0.35px currentColor;">Mon 1/10</span>
<span class="t" style="left:530.1px;top:391.2px;font-size:17px;color:#2a2a2a;letter-spacing:0.849px;-webkit-text-stroke:0.35px currentColor;">Tue 1/11</span>
<span class="t" style="left:710.1px;top:391.2px;font-size:17px;color:#2a2a2a;letter-spacing:0.943px;-webkit-text-stroke:0.35px currentColor;">Wed 1/12</span>
<span class="t" style="left:897.2px;top:391.2px;font-size:17px;color:#2a2a2a;letter-spacing:0.800px;-webkit-text-stroke:0.35px currentColor;">Thu 1/13</span>
<span class="t" style="left:1086.4px;top:391.2px;font-size:17px;color:#2a2a2a;letter-spacing:0.671px;-webkit-text-stroke:0.35px currentColor;">Fri 1/14</span>
<span class="t" style="left:1267.8px;top:391.2px;font-size:17px;color:#2a2a2a;letter-spacing:0.584px;-webkit-text-stroke:0.35px currentColor;">Sat 1/15</span>
<span class="t" style="left:46.6px;top:435.6px;font-size:17.5px;color:#3a3a3a;letter-spacing:0.250px;">all-day</span>
<div style="left:39.5px;top:503.3px;width:1355.5px;height:1.2px;border-top:1px dotted #d0d0d0;height:0;"></div>
<span class="t" style="left:52.7px;top:480.4px;font-size:18px;color:#3a3a3a;letter-spacing:0.578px;">12am</span>
<div style="left:39.5px;top:530.3px;width:1355.5px;height:1px;background:#e3e3e3;"></div>
<div style="left:39.5px;top:557.3px;width:1355.5px;height:1.2px;border-top:1px dotted #d0d0d0;height:0;"></div>
<span class="t" style="left:63.0px;top:534.4px;font-size:18px;color:#3a3a3a;letter-spacing:0.677px;">1am</span>
<div style="left:39.5px;top:584.3px;width:1355.5px;height:1px;background:#e3e3e3;"></div>
<div style="left:39.5px;top:611.3px;width:1355.5px;height:1.2px;border-top:1px dotted #d0d0d0;height:0;"></div>
<span class="t" style="left:63.0px;top:588.4px;font-size:18px;color:#3a3a3a;letter-spacing:0.677px;">2am</span>
<div style="left:39.5px;top:638.3px;width:1355.5px;height:1px;background:#e3e3e3;"></div>
<div style="left:39.5px;top:665.3px;width:1355.5px;height:1.2px;border-top:1px dotted #d0d0d0;height:0;"></div>
<span class="t" style="left:63.0px;top:642.4px;font-size:18px;color:#3a3a3a;letter-spacing:0.677px;">3am</span>
<div style="left:39.5px;top:692.3px;width:1355.5px;height:1px;background:#e3e3e3;"></div>
<div style="left:39.5px;top:719.3px;width:1355.5px;height:1.2px;border-top:1px dotted #d0d0d0;height:0;"></div>
<span class="t" style="left:63.0px;top:696.4px;font-size:18px;color:#3a3a3a;letter-spacing:0.677px;">4am</span>
<div style="left:39.5px;top:746.3px;width:1355.5px;height:1px;background:#e3e3e3;"></div>
<div style="left:39.5px;top:773.3px;width:1355.5px;height:1.2px;border-top:1px dotted #d0d0d0;height:0;"></div>
<span class="t" style="left:63.0px;top:750.4px;font-size:18px;color:#3a3a3a;letter-spacing:0.677px;">5am</span>
<div style="left:39.5px;top:800.3px;width:1355.5px;height:1px;background:#e3e3e3;"></div>
<div style="left:39.5px;top:827.3px;width:1355.5px;height:1.2px;border-top:1px dotted #d0d0d0;height:0;"></div>
<span class="t" style="left:63.0px;top:804.4px;font-size:18px;color:#3a3a3a;letter-spacing:0.677px;">6am</span>
<div style="left:39.5px;top:854.3px;width:1355.5px;height:1px;background:#e3e3e3;"></div>
<div style="left:39.5px;top:881.3px;width:1355.5px;height:1.2px;border-top:1px dotted #d0d0d0;height:0;"></div>
<span class="t" style="left:63.0px;top:858.4px;font-size:18px;color:#3a3a3a;letter-spacing:0.677px;">7am</span>
<div style="left:39.5px;top:908.3px;width:1355.5px;height:1px;background:#e3e3e3;"></div>
<div style="left:39.5px;top:935.3px;width:1355.5px;height:1.2px;border-top:1px dotted #d0d0d0;height:0;"></div>
<span class="t" style="left:63.0px;top:912.4px;font-size:18px;color:#3a3a3a;letter-spacing:0.677px;">8am</span>
<div style="left:39.5px;top:962.3px;width:1355.5px;height:1px;background:#e3e3e3;"></div>
<div style="left:39.5px;top:989.3px;width:1355.5px;height:1.2px;border-top:1px dotted #d0d0d0;height:0;"></div>
<span class="t" style="left:63.0px;top:966.4px;font-size:18px;color:#3a3a3a;letter-spacing:0.677px;">9am</span>
<div style="left:39.5px;top:1016.3px;width:1355.5px;height:1px;background:#e3e3e3;"></div>
<div style="left:39.5px;top:1043.3px;width:1355.5px;height:1.2px;border-top:1px dotted #d0d0d0;height:0;"></div>
<span class="t" style="left:52.7px;top:1020.4px;font-size:18px;color:#3a3a3a;letter-spacing:0.578px;">10am</span>
<div style="left:106.3px;top:476.3px;width:1px;height:520px;background:#e3e3e3;"></div>
<div style="left:290.23px;top:476.3px;width:1px;height:520px;background:#e3e3e3;"></div>
<div style="left:474.16px;top:476.3px;width:1px;height:520px;background:#e3e3e3;"></div>
<div style="left:658.09px;top:476.3px;width:1px;height:520px;background:#e3e3e3;"></div>
<div style="left:842.02px;top:476.3px;width:1px;height:520px;background:#e3e3e3;"></div>
<div style="left:1025.95px;top:476.3px;width:1px;height:520px;background:#e3e3e3;"></div>
<div style="left:1209.88px;top:476.3px;width:1px;height:520px;background:#e3e3e3;"></div>
<div style="left:1393.81px;top:476.3px;width:1px;height:520px;background:#e3e3e3;"></div>
<div style="left:838.82px;top:476.3px;width:4px;height:520px;background:#fdf4d3;"></div>
<div style="left:109.6px;top:473.3px;width:176.53px;height:38.9px;background:#fff;border:1.200px solid #c9c9c9;border-radius:4px;box-sizing:border-box;"></div>
<span class="t" style="left:113.6px;top:483.7px;font-size:13px;color:#c2c2c2;letter-spacing:0.059px;font-style:italic;">12:00 - 12:41 - Past run</span>
<div style="left:109.6px;top:516.8px;width:176.53px;height:96.2px;background:#fff;border:1.200px solid #c9c9c9;border-radius:4px;box-sizing:border-box;"></div>
<span class="t" style="left:113.6px;top:524.5px;font-size:13px;color:#c2c2c2;letter-spacing:-0.075px;font-style:italic;">12:45 - 2:33</span>
<span class="t" style="left:113.6px;top:550.7px;font-size:16px;color:#c2c2c2;letter-spacing:-0.148px;font-style:italic;">Past run</span>
<div style="left:109.6px;top:615.8px;width:176.53px;height:91.7px;background:#fff;border:1.200px solid #c9c9c9;border-radius:4px;box-sizing:border-box;"></div>
<span class="t" style="left:113.6px;top:623.5px;font-size:13px;color:#c2c2c2;letter-spacing:-0.086px;font-style:italic;">2:35 - 4:18</span>
<span class="t" style="left:113.6px;top:649.7px;font-size:16px;color:#c2c2c2;letter-spacing:-0.148px;font-style:italic;">Past run</span>
<div style="left:109.6px;top:710.3px;width:176.53px;height:87.2px;background:#fff;border:1.200px solid #c9c9c9;border-radius:4px;box-sizing:border-box;"></div>
<span class="t" style="left:113.6px;top:718.0px;font-size:13px;color:#c2c2c2;letter-spacing:-0.086px;font-style:italic;">4:20 - 5:58</span>
<span class="t" style="left:113.6px;top:744.2px;font-size:16px;color:#c2c2c2;letter-spacing:-0.148px;font-style:italic;">Past run</span>
<div style="left:109.6px;top:800.3px;width:176.53px;height:87.2px;background:#fff;border:1.200px solid #c9c9c9;border-radius:4px;box-sizing:border-box;"></div>
<span class="t" style="left:113.6px;top:808.0px;font-size:13px;color:#c2c2c2;letter-spacing:-0.086px;font-style:italic;">6:00 - 7:38</span>
<span class="t" style="left:113.6px;top:834.2px;font-size:16px;color:#c2c2c2;letter-spacing:-0.148px;font-style:italic;">Past run</span>
<div style="left:109.6px;top:890.3px;width:176.53px;height:69.2px;background:#fff;border:1.200px solid #c9c9c9;border-radius:4px;box-sizing:border-box;"></div>
<span class="t" style="left:113.6px;top:898.0px;font-size:13px;color:#c2c2c2;letter-spacing:-0.086px;font-style:italic;">7:40 - 8:58</span>
<span class="t" style="left:113.6px;top:924.2px;font-size:16px;color:#c2c2c2;letter-spacing:-0.148px;font-style:italic;">Past run</span>
<div style="left:109.6px;top:962.3px;width:176.53px;height:80px;background:#fff;border:1.200px solid #c9c9c9;border-radius:4px;box-sizing:border-box;"></div>
<span class="t" style="left:113.6px;top:970.0px;font-size:13px;color:#c2c2c2;letter-spacing:-0.075px;font-style:italic;">9:00 - 10:30</span>
<span class="t" style="left:113.6px;top:996.2px;font-size:16px;color:#c2c2c2;letter-spacing:-0.148px;font-style:italic;">Past run</span>
<div style="left:293.53px;top:473.3px;width:176.53px;height:166.7px;background:#fff;border:1.200px solid #c9c9c9;border-radius:4px;box-sizing:border-box;"></div>
<span class="t" style="left:297.5px;top:484.0px;font-size:13px;color:#c2c2c2;letter-spacing:-0.075px;font-style:italic;">12:00 - 3:03</span>
<span class="t" style="left:297.5px;top:510.2px;font-size:16px;color:#c2c2c2;letter-spacing:-0.148px;font-style:italic;">Past run</span>
<div style="left:293.53px;top:642.8px;width:176.53px;height:222.2px;background:#fff;border:1.200px solid #c9c9c9;border-radius:4px;box-sizing:border-box;"></div>
<span class="t" style="left:297.5px;top:650.5px;font-size:13px;color:#c2c2c2;letter-spacing:-0.086px;font-style:italic;">3:05 - 7:13</span>
<span class="t" style="left:297.5px;top:676.7px;font-size:16px;color:#c2c2c2;letter-spacing:-0.148px;font-style:italic;">Past run</span>
<div style="left:293.53px;top:867.8px;width:176.53px;height:128.6px;background:#fff;border:1.200px solid #c9c9c9;border-radius:4px;box-sizing:border-box;"></div>
<span class="t" style="left:297.5px;top:875.5px;font-size:13px;color:#c2c2c2;letter-spacing:-0.086px;font-style:italic;">7:15 - 9:39</span>
<span class="t" style="left:297.5px;top:901.7px;font-size:16px;color:#c2c2c2;letter-spacing:-0.148px;font-style:italic;">Past run</span>
<div style="left:477.46px;top:473.3px;width:176.53px;height:51.5px;background:#fff;border:1.200px solid #c9c9c9;border-radius:4px;box-sizing:border-box;"></div>
<span class="t" style="left:481.5px;top:484.0px;font-size:13px;color:#c2c2c2;letter-spacing:-0.065px;font-style:italic;">12:00 - 12:55</span>
<span class="t" style="left:481.5px;top:510.2px;font-size:16px;color:#c2c2c2;letter-spacing:-0.148px;font-style:italic;">Past run</span>
<div style="left:477.46px;top:530.3px;width:176.53px;height:67.4px;background:#fff;border:1.200px solid #c9c9c9;border-radius:4px;box-sizing:border-box;"></div>
<span class="t" style="left:481.5px;top:538.0px;font-size:13px;color:#c2c2c2;letter-spacing:-0.086px;font-style:italic;">1:00 - 2:16</span>
<span class="t" style="left:481.5px;top:564.2px;font-size:16px;color:#c2c2c2;letter-spacing:-0.148px;font-style:italic;">Past run</span>
<div style="left:477.46px;top:602.3px;width:176.53px;height:71.9px;background:#fff;border:1.200px solid #c9c9c9;border-radius:4px;box-sizing:border-box;"></div>
<span class="t" style="left:481.5px;top:610.0px;font-size:13px;color:#c2c2c2;letter-spacing:-0.086px;font-style:italic;">2:20 - 3:41</span>
<span class="t" style="left:481.5px;top:636.2px;font-size:16px;color:#c2c2c2;letter-spacing:-0.148px;font-style:italic;">Past run</span>
<div style="left:477.46px;top:678.8px;width:176.53px;height:66.5px;background:#fff;border:1.200px solid #c9c9c9;border-radius:4px;box-sizing:border-box;"></div>
<span class="t" style="left:481.5px;top:686.5px;font-size:13px;color:#c2c2c2;letter-spacing:-0.086px;font-style:italic;">3:45 - 5:00</span>
<span class="t" style="left:481.5px;top:712.7px;font-size:16px;color:#c2c2c2;letter-spacing:-0.148px;font-style:italic;">Past run</span>
<div style="left:477.46px;top:750.8px;width:176.53px;height:67.4px;background:#fff;border:1.200px solid #c9c9c9;border-radius:4px;box-sizing:border-box;"></div>
<span class="t" style="left:481.5px;top:758.5px;font-size:13px;color:#c2c2c2;letter-spacing:-0.086px;font-style:italic;">5:05 - 6:21</span>
<span class="t" style="left:481.5px;top:784.7px;font-size:16px;color:#c2c2c2;letter-spacing:-0.148px;font-style:italic;">Past run</span>
<div style="left:477.46px;top:822.8px;width:176.53px;height:80.9px;background:#fff;border:1.200px solid #c9c9c9;border-radius:4px;box-sizing:border-box;"></div>
<span class="t" style="left:481.5px;top:830.5px;font-size:13px;color:#c2c2c2;letter-spacing:-0.086px;font-style:italic;">6:25 - 7:56</span>
<span class="t" style="left:481.5px;top:856.7px;font-size:16px;color:#c2c2c2;letter-spacing:-0.148px;font-style:italic;">Past run</span>
<div style="left:477.46px;top:908.3px;width:176.53px;height:73.7px;background:#fff;border:1.200px solid #c9c9c9;border-radius:4px;box-sizing:border-box;"></div>
<span class="t" style="left:481.5px;top:916.0px;font-size:13px;color:#c2c2c2;letter-spacing:-0.086px;font-style:italic;">8:00 - 9:23</span>
<span class="t" style="left:481.5px;top:942.2px;font-size:16px;color:#c2c2c2;letter-spacing:-0.148px;font-style:italic;">Past run</span>
<div style="left:661.39px;top:473.3px;width:176.53px;height:580.7px;background:#fff;border:1.200px solid #c9c9c9;border-radius:4px;box-sizing:border-box;"></div>
<span class="t" style="left:665.4px;top:484.0px;font-size:13px;color:#c2c2c2;letter-spacing:-0.065px;font-style:italic;">12:00 - 10:43</span>
<span class="t" style="left:665.4px;top:510.2px;font-size:16px;color:#c2c2c2;letter-spacing:-0.148px;font-style:italic;">Past run</span>
<div style="left:845.02px;top:638.8px;width:175.43px;height:30px;background:#3788d8;border-radius:4px;"></div>
<span class="t" style="left:847.0px;top:647.3px;font-size:14px;color:#fff;letter-spacing:-0.249px;">3:00 - Scheduled run</span>
<div style="left:845.02px;top:854.8px;width:175.43px;height:30px;background:#3788d8;border-radius:4px;"></div>
<span class="t" style="left:847.0px;top:863.3px;font-size:14px;color:#fff;letter-spacing:-0.249px;">7:00 - Scheduled run</span>
<div style="left:1028.95px;top:638.8px;width:175.43px;height:30px;background:#3788d8;border-radius:4px;"></div>
<span class="t" style="left:1031.0px;top:647.3px;font-size:14px;color:#fff;letter-spacing:-0.249px;">3:00 - Scheduled run</span>
<div style="left:1028.95px;top:854.8px;width:175.43px;height:30px;background:#3788d8;border-radius:4px;"></div>
<span class="t" style="left:1031.0px;top:863.3px;font-size:14px;color:#fff;letter-spacing:-0.249px;">7:00 - Scheduled run</span>
<div style="left:1212.88px;top:638.8px;width:175.43px;height:30px;background:#3788d8;border-radius:4px;"></div>
<span class="t" style="left:1214.9px;top:647.3px;font-size:14px;color:#fff;letter-spacing:-0.249px;">3:00 - Scheduled run</span>
<div style="left:1212.88px;top:854.8px;width:175.43px;height:30px;background:#3788d8;border-radius:4px;"></div>
<span class="t" style="left:1214.9px;top:863.3px;font-size:14px;color:#fff;letter-spacing:-0.249px;">7:00 - Scheduled run</span>
<div style="left:38.5px;top:471.2px;width:1356.5px;height:5.5px;background:#f2f2f2;border-top:1.200px solid #e2e2e2;border-bottom:1.200px solid #e2e2e2;box-sizing:border-box;"></div></div>
<div style="left:2330.5px;top:1595px;width:86.5px;height:46px;background:#4d5b8f;border-radius:5px;box-shadow:0 4px 2px -2px rgba(0,0,0,.2),0 2px 3px 0 rgba(0,0,0,.14),0 1px 6px 0 rgba(0,0,0,.12);"></div>
<span class="t" style="left:2351.0px;top:1609.4px;font-size:18px;color:#fff;letter-spacing:-0.004px;">Close</span>
<svg style="left:1113px;top:566px;" width="20" height="24" viewBox="0 0 20 24"><path d="M6 11 V2.500 a1.800 1.800 0 0 1 3.600 0 V9 h0.400 V8 a1.700 1.700 0 0 1 3.200 0 V9.500 h0.400 V9 a1.600 1.600 0 0 1 3 0 V10.500 h0.300 a1.500 1.500 0 0 1 2.600 0.500 V16 c0 4 -2 7 -5.500 7 H11 c-3 0 -4.500 -2 -6 -4.500 L1.500 13 a1.600 1.600 0 0 1 2.600 -1.600 Z" fill="#fff" stroke="#222" stroke-width="1.300" stroke-linejoin="round"/></svg>
</div></body></html>
